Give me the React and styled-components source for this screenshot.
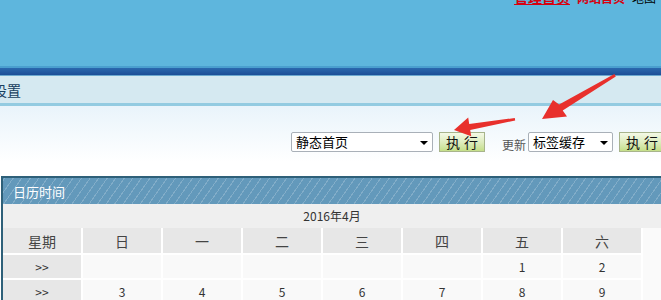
import React from 'react'
import styled, { createGlobalStyle } from 'styled-components'

const GlobalStyle = createGlobalStyle`
  html, body { margin: 0; padding: 0; background: #fff; }
  body {
    width: 661px;
    height: 300px;
    overflow: hidden;
    font-family: "Noto Sans CJK SC", "DejaVu Sans", sans-serif;
  }
`

const Page = styled.div`
  position: relative;
  width: 661px;
  height: 300px;
  overflow: hidden;
`

const Top = styled.div`
  height: 66px;
  background: #5eb6dd;
  display: flex;
  justify-content: flex-end;
  align-items: flex-start;
  overflow: hidden;
`

const TopLinks = styled.div`
  display: flex;
  align-items: baseline;
  gap: 7px;
  margin-top: -10px;
  margin-right: 5px;
  line-height: 14px;
`

const TopLink = styled.a`
  font-size: ${p => (p.$big ? '14px' : '12px')};
  font-weight: ${p => (p.$plain ? 'normal' : 'bold')};
  color: ${p => (p.$plain ? '#000' : '#d8000f')};
  text-decoration: ${p => (p.$under ? 'underline' : 'none')};
`

const Band = styled.div`
  height: 10px;
  background: linear-gradient(#4a9fcf 0, #4a9fcf 2px, #2a68ae 2px, #1c4f97 9px, #6aa8cf 9px);
`

const NavBar = styled.div`
  height: 27px;
  background: #d5e9f1;
  border-bottom: 3px solid #93cbe1;
  display: flex;
  align-items: center;
  font-size: 14px;
  color: #17405f;
  overflow: hidden;
`

const NavTitle = styled.span`
  margin-left: -7px;
  white-space: nowrap;
`

const Toolbar = styled.div`
  height: 70px;
  background: linear-gradient(#e9f4fb, #ffffff 80%);
  display: flex;
  align-items: center;
  padding-left: 291px;
  gap: 6px;
  white-space: nowrap;
  padding-top: 1px;
  box-sizing: border-box;
`

const Select = styled.div`
  width: ${p => p.$w}px;
  height: 20px;
  box-sizing: border-box;
  border: 1px solid #a9b0b8;
  border-radius: 2px;
  background: #fff;
  display: flex;
  align-items: center;
  justify-content: space-between;
  padding: 0 4px 0 4px;
  font-size: 13px;
  color: #000;
  flex: none;
`

const Caret = styled.span`
  width: 0;
  height: 0;
  border-left: 4px solid transparent;
  border-right: 4px solid transparent;
  border-top: 4px solid #000;
  margin-top: 2px;
`

const RunButton = styled.button`
  width: 46px;
  height: 20px;
  flex: none;
  border: 1px solid #a7b48c;
  background: linear-gradient(#f4f9e6, #dcebbb 55%, #c4df88);
  font-family: inherit;
  font-size: 14px;
  letter-spacing: 4px;
  padding: 0 0 0 4px;
  color: #111;
  line-height: 18px;
  margin-right: ${p => p.$gap || 0}px;
`

const Label = styled.span`
  font-size: 12px;
  color: #555;
  margin-top: 6px;
  margin-right: -4px;
`

const Panel = styled.div`
  margin-left: 1px;
  border-top: 2px solid #2e6079;
  border-left: 2px solid #2e6079;
  background: #fafafa;
  height: 200px;
`

const PanelHead = styled.div`
  height: 26px;
  background-color: #6399bb;
  background-image: repeating-linear-gradient(
    -55deg,
    rgba(255, 255, 255, 0) 0,
    rgba(255, 255, 255, 0) 6px,
    rgba(255, 255, 255, 0.2) 6px,
    rgba(255, 255, 255, 0.2) 7px
  );
  color: #fff;
  font-size: 13px;
  display: flex;
  align-items: center;
  padding-left: 10px;
`

const Month = styled.div`
  height: 24px;
  background: #efefef;
  font-size: 12px;
  color: #333;
  display: flex;
  align-items: center;
  justify-content: center;
  padding-bottom: 1px;
  box-sizing: border-box;
`

const Grid = styled.table`
  border-collapse: separate;
  border-spacing: 0;
  width: 640px;
  font-size: 12px;
  color: #333;
`

const Cell = styled.td`
  width: 78px;
  height: ${p => (p.$head ? 25 : 23)}px;
  padding: 0;
  text-align: center;
  background: ${p => (p.$shade ? '#e7e7e7' : '#f9f9f9')};
  border-right: 2px solid #fff;
  border-bottom: 2px solid #fff;
  font-size: ${p => (p.$head ? '14px' : '12px')};
  color: ${p => (p.$head ? '#444' : '#333')};
`

const Overlay = styled.svg`
  position: absolute;
  left: 0;
  top: 0;
  pointer-events: none;
`

const week = ['日', '一', '二', '三', '四', '五', '六']
const rows = [
  ['', '', '', '', '', '1', '2'],
  ['3', '4', '5', '6', '7', '8', '9'],
]

export default function App() {
  return (
    <Page>
      <GlobalStyle />
      <Top>
        <TopLinks>
          <TopLink $big $under>管理首页</TopLink>
          <TopLink>网站首页</TopLink>
          <TopLink $plain>地图</TopLink>
        </TopLinks>
      </Top>
      <Band />
      <NavBar>
        <NavTitle>设置</NavTitle>
      </NavBar>
      <Toolbar>
        <Select $w={142}>
          <span>静态首页</span>
          <Caret />
        </Select>
        <RunButton $gap={11}>执行</RunButton>
        <Label>更新</Label>
        <Select $w={85}>
          <span>标签缓存</span>
          <Caret />
        </Select>
        <RunButton>执行</RunButton>
      </Toolbar>
      <Panel>
        <PanelHead>日历时间</PanelHead>
        <Month>2016年4月</Month>
        <Grid>
          <tbody>
            <tr>
              <Cell $head $shade>星期</Cell>
              {week.map(d => (
                <Cell key={d} $head $shade>{d}</Cell>
              ))}
            </tr>
            {rows.map((r, i) => (
              <tr key={i}>
                <Cell $shade>&gt;&gt;</Cell>
                {r.map((d, j) => (
                  <Cell key={j}>{d}</Cell>
                ))}
              </tr>
            ))}
          </tbody>
        </Grid>
      </Panel>
      <Overlay width="661" height="300" viewBox="0 0 661 300">
        <polygon
          fill="#e8302c"
          points="514.8,118 469.2,123.9 468.2,117.5 454,130 471.2,136.3 470.2,129.9 515.2,120.5"
        />
        <polygon
          fill="#e8302c"
          points="614.4,74 559.1,104.6 553,100 542,119 567,116.5 562.7,110.6 615.8,76.4"
        />
      </Overlay>
    </Page>
  )
}
